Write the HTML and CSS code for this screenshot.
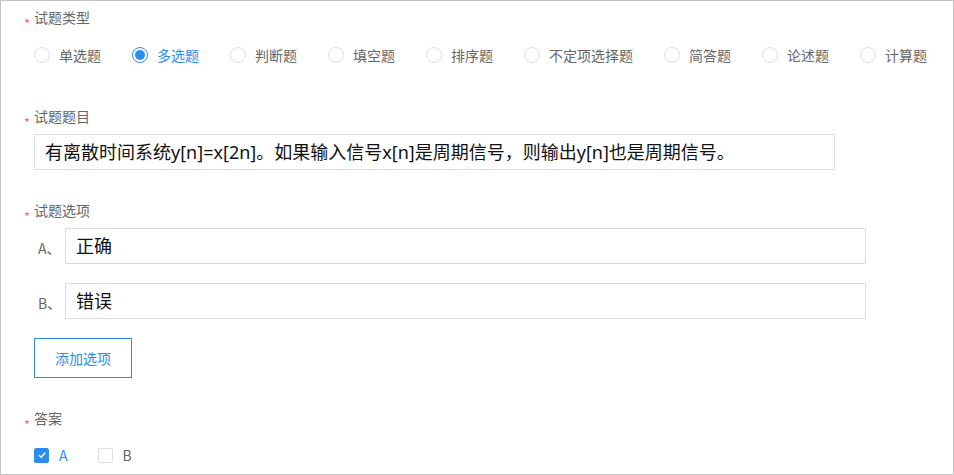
FILE: index.html
```html
<!DOCTYPE html>
<html>
<head>
<meta charset="utf-8">
<link rel="stylesheet" href="styles.css">
</head>
<body>
<div class="frame">

	<div class="field">
		<div class="label"><span class="star">*</span>试题类型</div>
		<div class="radios">
			<label class="radio"><span class="dot"></span>单选题</label>
			<label class="radio on"><span class="dot"></span>多选题</label>
			<label class="radio"><span class="dot"></span>判断题</label>
			<label class="radio"><span class="dot"></span>填空题</label>
			<label class="radio"><span class="dot"></span>排序题</label>
			<label class="radio"><span class="dot"></span>不定项选择题</label>
			<label class="radio"><span class="dot"></span>简答题</label>
			<label class="radio"><span class="dot"></span>论述题</label>
			<label class="radio"><span class="dot"></span>计算题</label>
		</div>
	</div>

	<div class="field">
		<div class="label"><span class="star">*</span>试题题目</div>
		<div class="input title">有离散时间系统y[n]=x[2n]。如果输入信号x[n]是周期信号，则输出y[n]也是周期信号。</div>
	</div>

	<div class="field">
		<div class="label"><span class="star">*</span>试题选项</div>
		<div class="option">
			<span class="letter">A、</span>
			<div class="input">正确</div>
		</div>
		<div class="option">
			<span class="letter">B、</span>
			<div class="input">错误</div>
		</div>
		<button class="add">添加选项</button>
	</div>

	<div class="field">
		<div class="label"><span class="star">*</span>答案</div>
		<div class="checks">
			<label class="check on"><span class="box">
				<svg width="10" height="10" viewBox="0 0 10 10"><path d="M2 5.2 L4.2 7.2 L8.2 2.8" fill="none" stroke="#fff" stroke-width="1.4"/></svg>
			</span>A</label>
			<label class="check"><span class="box"></span>B</label>
		</div>
	</div>

</div>
</body>
</html>
```

FILE: styles.css
```css
html, body {
	margin: 0;
	padding: 0;
}

body {
	font-family: "Noto Sans CJK SC", "Liberation Sans", sans-serif;
	font-size: 14px;
	color: #666;
	background: #fff;
}

.frame {
	box-sizing: border-box;
	width: 954px;
	height: 475px;
	border: 1px solid #c4c4c4;
	padding: 6px 0 0 33px;
	overflow: hidden;
}

.field {
	margin-bottom: 30px;
}
.field:first-child {
	margin-bottom: 41px;
}

.label {
	height: 20px;
	line-height: 20px;
	margin-left: -10px;
	color: #666;
}
.star {
	display: inline-block;
	width: 10px;
	color: #f56c6c;
	font-size: 13px;
	vertical-align: -6px;
}

.radios {
	display: flex;
	margin-top: 18px;
	height: 20px;
	align-items: center;
}
.radio {
	display: flex;
	align-items: center;
	margin-right: 31px;
	line-height: 20px;
	white-space: nowrap;
}
.dot {
	box-sizing: border-box;
	width: 16px;
	height: 16px;
	border: 1px solid #dcdee2;
	border-radius: 50%;
	margin-right: 9px;
	display: flex;
	align-items: center;
	justify-content: center;
}
.radio.on {
	color: #2d8cf0;
}
.radio.on .dot {
	border-color: #2d8cf0;
}
.radio.on .dot::after {
	content: "";
	width: 10px;
	height: 10px;
	border-radius: 50%;
	background: #2d8cf0;
}

.input {
	box-sizing: border-box;
	width: 801px;
	height: 36px;
	border: 1px solid #dcdcdc;
	padding-left: 10px;
	font-family: "Noto Sans", "Noto Sans CJK SC", sans-serif;
	font-size: 18px;
	line-height: 34px;
	color: #111;
	white-space: nowrap;
}
.title {
	margin-top: 8px;
}

.option {
	display: flex;
	align-items: center;
	margin-top: 8px;
}
.option + .option {
	margin-top: 19px;
}
.letter {
	width: 31px;
	padding-left: 4px;
	box-sizing: border-box;
	color: #666;
	padding-top: 4px;
}

.add {
	box-sizing: border-box;
	margin-top: 19px;
	width: 98px;
	height: 40px;
	border: 1px solid #2d8cf0;
	background: #fff;
	color: #2d8cf0;
	font-family: inherit;
	font-size: 14px;
	padding: 0;
}

.checks {
	display: flex;
	margin-top: 17px;
	height: 20px;
	align-items: center;
}
.check {
	display: flex;
	align-items: center;
	margin-right: 30px;
	line-height: 20px;
}
.box {
	box-sizing: border-box;
	width: 15px;
	height: 15px;
	border: 1px solid #dcdee2;
	border-radius: 2px;
	margin-right: 10px;
	display: flex;
	align-items: center;
	justify-content: center;
}
.check.on {
	color: #2d8cf0;
}
.check.on .box {
	background: #2d8cf0;
	border-color: #2d8cf0;
}
```
